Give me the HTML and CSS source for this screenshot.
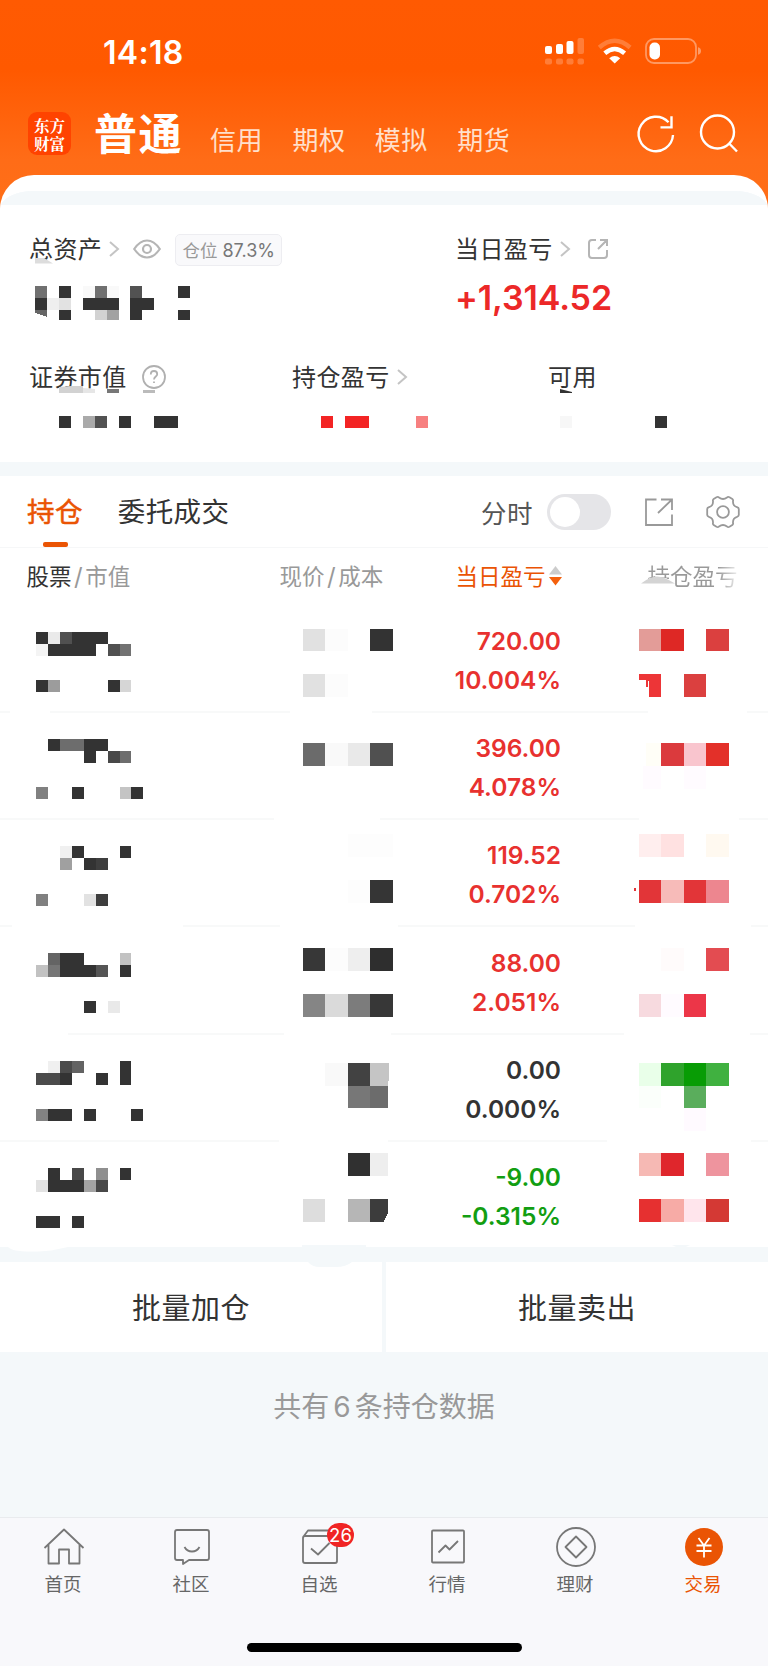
FILE: index.html
```html
<!DOCTYPE html>
<html lang="zh-CN">
<head>
<meta charset="utf-8">
<title>东方财富 交易</title>
<link rel="stylesheet" href="styles.css">
</head>
<body>
<header class="hero">
  <div class="status">
    <span class="clock">14:18</span>
    <svg class="status-icons" width="160" height="30" viewBox="0 0 160 30">
      <g fill="#fff">
        <rect x="1" y="9" width="7" height="8" rx="2"/><rect x="12" y="7" width="7" height="10" rx="2"/><rect x="22.500" y="4" width="7" height="13" rx="2"/>
        <g opacity=".22"><rect x="33.500" y="1" width="6.500" height="16" rx="2"/><rect x="1" y="21.500" width="7" height="6" rx="2"/><rect x="12" y="21.500" width="7" height="6" rx="2"/><rect x="22.500" y="21.500" width="7" height="6" rx="2"/><rect x="33.500" y="21.500" width="6.500" height="6" rx="2"/></g>
        <path d="M70.700 26.600 65.200 21.200Q70.700 16.700 76.200 21.200Z"/>
        <rect x="105.500" y="5.500" width="10.500" height="17" rx="5"/>
      </g>
      <g fill="none" stroke="#fff">
        <path d="M60.800 16.300Q70.700 7.700 80.600 16.300" stroke-width="4.500"/>
        <path d="M55.300 10.500Q70.700-3 86.100 10.500" stroke-width="4.500" opacity=".22"/>
        <rect x="102" y="2" width="50" height="24" rx="8" stroke-width="1.800" opacity=".38"/>
      </g>
      <path d="M154 10.200q3 .8 3 3.800t-3 3.800z" fill="#fff" opacity=".4"/>
    </svg>
  </div>
  <nav class="accounts">
    <div class="logo"><span>东方</span><span>财富</span></div>
    <h1>普通</h1>
    <span class="account">信用</span><span class="account">期权</span><span class="account">模拟</span><span class="account">期货</span>
    <svg class="hero-icon refresh" width="40" height="40" viewBox="0 0 40 40"><path d="M37 21A17.200 17.200 0 1 1 32.500 8.300M35.500 2.300V13.400H24.500" /></svg>
    <svg class="hero-icon" width="40" height="40" viewBox="0 0 40 40"><circle cx="18.500" cy="18" r="16.500"/><path d="M29.700 29 38 37.500"/></svg>
  </nav>
</header>

<main class="sheet">
  <div class="band band-top"></div>
  <section class="summary">
    <div class="totals">
      <div class="total">
        <div class="label-row">
          <span class="label total-label">总资产<svg class="smudge" width="18" height="6" viewBox="0 0 18 6"><path d="M0 0H9L18 5.500H0Z" fill="#ddd"/></svg></span>
          <svg class="chevron" width="10" height="16" viewBox="0 0 10 16"><path d="M1 1 9 8 1 15"/></svg>
          <svg class="eye" width="28" height="20" viewBox="0 0 28 20"><path d="M1.200 10Q7 1.500 14 1.500T26.800 10Q21 18.500 14 18.500T1.200 10Z"/><circle cx="14" cy="10" r="4"/></svg>
          <span class="position"><span>仓位</span> <b>87.3%</b></span>
        </div>
        <svg class="pixels big-pixels" width="155.090" height="33.600" viewBox="0 0 13 2.820" preserveAspectRatio="none">
          <g fill="#333"><path d="M2 0h1v1h-1zM12 0h1v1h-1zM0 1h1v1h-1zM4 1h3v1h-3zM8 1h2v1h-2zM2 2h1v.82h-1zM8 2h1v.82h-1zM12 2h1v.82h-1z"/></g>
          <path fill="#707070" d="M0 0h1v1h-1zM5 0h1v1h-1z"/><path fill="#525252" d="M8 0h1v1h-1z"/><path fill="#666" d="M0 2h1v.6L0 2.250z"/>
          <path fill="#f9f9f9" d="M4 0h1v1h-1zM6 0h1v1h-1z"/><path fill="#efefef" d="M1 1h1v1h-1z"/><path fill="#e2e2e2" d="M2 1h1v1h-1z"/><path fill="#d2d2d2" d="M5 2h1v.82h-1z"/><path fill="#a2a2a2" d="M6 2h1v.82h-1z"/>
        </svg>
      </div>
      <div class="total">
        <div class="label-row">
          <span class="label">当日盈亏</span>
          <svg class="chevron" width="10" height="16" viewBox="0 0 10 16"><path d="M1 1 9 8 1 15"/></svg>
          <svg class="share-small" width="22" height="22" viewBox="0 0 22 22"><path d="M9 2H5Q2 2 2 5V17Q2 20 5 20H17Q20 20 20 17V12M13 2H20V8M20 2 11 11"/></svg>
        </div>
        <div class="profit">+1,314.52</div>
      </div>
    </div>
    <div class="details">
      <div>
        <div class="label-row"><span class="label sec-label">证券市值<svg class="smudge" width="100" height="8" viewBox="0 0 100 8"><path d="M0 2 12 1H24V8H0Z" fill="#d2d2d2"/><path d="M24 3 36 4V8H24Z" fill="#e6e6e6"/><path d="M48 4H60V8H48Z" fill="#777"/><path d="M84 5H96V8H84Z" fill="#bbb"/></svg></span>
          <svg class="help" width="24" height="24" viewBox="0 0 24 24"><circle cx="12" cy="12" r="11"/><path d="M8.800 9.500Q8.800 6 12 6T15.200 9.200C15.200 11.500 12 11.600 12 14.500M12 16.500V18"/></svg></div>
        <svg class="pixels detail-pixels" width="119.300" height="12" viewBox="0 0 10 1" preserveAspectRatio="none"><path fill="#333" d="M0 0h1v1h-1zM5 0h1v1h-1zM8 0h2v1h-2z"/><path fill="#aaa" d="M2 0h1v1h-1z"/><path fill="#525252" d="M3 0h1v1h-1z"/></svg>
      </div>
      <div>
        <div class="label-row"><span class="label">持仓盈亏</span><svg class="chevron" width="10" height="16" viewBox="0 0 10 16"><path d="M1 1 9 8 1 15"/></svg></div>
        <svg class="pixels detail-pixels held-pixels" width="107.400" height="12" viewBox="0 0 9 1" preserveAspectRatio="none"><path fill="#f32424" d="M0 0h1v1h-1zM2 0h2v1h-2z"/><path fill="#f78080" d="M8 0h1v1h-1z"/></svg>
      </div>
      <div>
        <div class="label-row"><span class="label avail-label">可用<svg class="smudge" width="12" height="4" viewBox="0 0 12 4"><path d="M0 0 12 3V4H0Z" fill="#333"/></svg></span></div>
        <svg class="pixels detail-pixels avail-pixels" width="107.400" height="12" viewBox="0 0 9 1" preserveAspectRatio="none"><path fill="#f7f7f7" d="M0 0h1v1h-1z"/><path fill="#333" d="M8 0h1v1h-1z"/></svg>
      </div>
    </div>
  </section>
  <div class="band"></div>

  <section class="holdings">
    <div class="tabs">
      <span class="tab active">持仓</span><span class="tab">委托成交</span>
      <span class="mode">分时</span><span class="toggle"></span>
      <svg class="tool share" width="28" height="28" viewBox="0 0 28 28"><path d="M11.500 1.500H1V27H27V16.500M16 1.500H27V12M27 1.500 13 15"/></svg>
      <svg class="tool" width="34" height="34" viewBox="0 0 34 34"><path d="M10.500 2.200Q12 1.400 13 2.500Q17 5.500 21 2.500Q22 1.400 23.500 2.200L26.300 3.900Q27.400 4.800 27 6.200Q26.700 11 31 12.200Q32.800 12.800 32.800 14V20Q32.800 21.200 31 21.800Q26.700 23 27 27.800Q27.400 29.200 26.300 30.100L23.500 31.800Q22 32.600 21 31.500Q17 28.500 13 31.500Q12 32.600 10.500 31.800L7.700 30.100Q6.600 29.200 7 27.800Q7.300 23 3 21.800Q1.200 21.200 1.200 20V14Q1.200 12.800 3 12.200Q7.300 11 7 6.200Q6.600 4.800 7.700 3.900Z"/><circle cx="17" cy="17" r="5.900"/></svg>
    </div>
    <div class="head">
      <span class="c-name"><b>股票</b><i>/</i>市值</span>
      <span class="c-price">现价<i>/</i>成本</span>
      <span class="c-day">当日盈亏<svg width="13" height="20" viewBox="0 0 13 20"><path d="M6.500 0 13 8.500H0Z" fill="#ccc"/><path d="M6.500 19.500 13 11H0Z" fill="#f4600c"/></svg></span>
      <span class="c-hold"><span class="fade">持仓盈亏</span><svg class="smudge" width="34" height="16" viewBox="0 0 34 16"><path d="M0 9.500 9 4H25L34 9.500V16H0Z" fill="#fff"/><path d="M0 9.500Q9 2.500 16 2.500T34 9.500Z" fill="#d4d4d4"/></svg></span>
    </div>

    <div class="row">
      <svg class="pixels name-px" viewBox="0 0 9 5" preserveAspectRatio="none"><path fill="#333" d="M0 0h1v1h-1zM3 0h3v1h-3zM1 1h4v1h-4zM0 4h1v1h-1zM6 4h1v1h-1z"/><path fill="#eaeaea" d="M1 0h1v1h-1z"/><path fill="#505050" d="M2 0h1v1h-1zM6 1h1v1h-1z"/><path fill="#f4f4f4" d="M0 1h1v1h-1z"/><path fill="#727272" d="M7 1h1v1h-1z"/><path fill="#9c9c9c" d="M1 4h1v1h-1z"/><path fill="#d6d6d6" d="M7 4h1v1h-1z"/></svg>
      <svg class="pixels cell-px" viewBox="0 0 90 107"><g transform="translate(0 24.600) scale(22.450 22.850)"><path fill="#e1e1e1" d="M0 0h1v1h-1zM0 2h1v1h-1z"/><path fill="#fcfcfc" d="M1 0h1v1h-1zM1 2h1v1h-1z"/><path fill="#333" d="M3 0h1v1h-1z"/></g></svg>
      <div class="day up"><span>720.00</span><span>10.004%</span></div>
      <svg class="pixels cell-px" viewBox="0 0 90 107"><g transform="translate(0 24.600) scale(22.450 22.850)"><path fill="#e39c98" d="M0 0h1v1h-1z"/><path fill="#de2825" d="M1 0h1v1h-1z"/><path fill="#db403f" d="M3 0h1v1h-1zM2 2h1v1h-1z"/><path fill="#ed3537" d="M0 2h1v1h-.55v-.7h-.05v.27h-.1v-.3h-.3z"/></g></svg>
      <svg class="rule" viewBox="0 0 768 2"><path d="M0 1H10M50 1H290M372 1H648M747 1H768"/></svg>
    </div>
    <div class="row">
      <svg class="pixels name-px" viewBox="0 0 9 5" preserveAspectRatio="none"><path fill="#333" d="M1 0h1v1h-1zM4 0h2v1h-2zM4 1h1v1h-1zM3 4h1v1h-1zM8 4h1v1h-1z"/><path fill="#6d6d6d" d="M2 0h2v1h-2zM7 1h1v1h-1z"/><path fill="#484848" d="M6 1h1v1h-1z"/><path fill="#808080" d="M0 4h1v1h-1z"/><path fill="#c4c4c4" d="M7 4h1v1h-1z"/></svg>
      <svg class="pixels cell-px" viewBox="0 0 90 107"><g transform="translate(0 31.300) scale(22.450 22.850)"><path fill="#6b6b6b" d="M0 0h1v1h-1z"/><path fill="#f9f9f9" d="M1 0h1v1h-1z"/><path fill="#e9e9e9" d="M2 0h1v1h-1z"/><path fill="#505050" d="M3 0h1v1h-1z"/></g></svg>
      <div class="day up"><span>396.00</span><span>4.078%</span></div>
      <svg class="pixels cell-px" viewBox="0 0 90 107"><g transform="translate(0 31.300) scale(22.450 22.850)"><path fill="#fffef7" d="M.3 0h.7v1h-.7z"/><path fill="#db3a3d" d="M1 0h1v1h-1z"/><path fill="#f9c5ce" d="M2 0h1v1h-1z"/><path fill="#e33029" d="M3 0h1v1h-1z"/><path fill="#fffbff" d="M.2 1h.8v1h-.8zM2 1h1v1h-1z"/></g></svg>
      <svg class="rule" viewBox="0 0 768 2"><path d="M0 1H274M380 1H639M739 1H768"/></svg>
    </div>
    <div class="row">
      <svg class="pixels name-px" viewBox="0 0 9 5" preserveAspectRatio="none"><path fill="#333" d="M3 0h1v1h-1zM7 0h1v1h-1zM4 1h1v1h-1z"/><path fill="#3e3e3e" d="M5 1h1v1h-1zM5 4h1v1h-1z"/><path fill="#f0f0f0" d="M2 0h1v1h-1z"/><path fill="#a0a0a0" d="M2 1h1v1h-1z"/><path fill="#808080" d="M0 4h1v1h-1z"/><path fill="#e2e2e2" d="M4 4h1v1h-1z"/></svg>
      <svg class="pixels cell-px" viewBox="0 0 90 107"><g transform="translate(0 15.100) scale(22.450 22.850)"><path fill="#fdfdfd" d="M2 0h2v1h-2zM2 2h1v1h-1z"/><path fill="#353535" d="M3 2h1v1h-1z"/></g></svg>
      <div class="day up"><span>119.52</span><span>0.702%</span></div>
      <svg class="pixels cell-px" viewBox="0 0 90 107"><g transform="translate(0 15.100) scale(22.450 22.850)"><path fill="#ffeeee" d="M0 0h1v1h-1z"/><path fill="#ffe1e1" d="M1 0h1v1h-1z"/><path fill="#fff9f0" d="M3 0h1v1h-1z"/><path fill="#e23538" d="M0 2h1v1h-1zM2 2h1v1h-1z"/><path fill="#f7bbb9" d="M1 2h1v1h-1z"/><path fill="#ed868f" d="M3 2h1v1h-1z"/><path fill="#e23538" d="M-.22 2.350h.09v.08l-.05.08h-.04z"/></g></svg>
      <svg class="rule" viewBox="0 0 768 2"><path d="M0 1H12M183 1H280M398 1H635M751 1H768"/></svg>
    </div>
    <div class="row">
      <svg class="pixels name-px" viewBox="0 0 9 5" preserveAspectRatio="none"><path fill="#333" d="M2 0h2v2h-2zM4 1h1v1h-1zM7 1h1v1h-1zM4 4h1v1h-1z"/><path fill="#646464" d="M1 0h1v1h-1z"/><path fill="#757575" d="M1 1h1v1h-1z"/><path fill="#c2c2c2" d="M0 1h1v1h-1zM7 0h1v1h-1z"/><path fill="#555" d="M5 1h1v1h-1z"/><path fill="#e9e9e9" d="M6 4h1v1h-1z"/></svg>
      <svg class="pixels cell-px" viewBox="0 0 90 107"><g transform="translate(0 22) scale(22.450 22.850)"><path fill="#373737" d="M0 0h1v1h-1zM3 2h1v1h-1z"/><path fill="#fcfcfc" d="M1 0h1v1h-1z"/><path fill="#eee" d="M2 0h1v1h-1z"/><path fill="#2e2e2e" d="M3 0h1v1h-1z"/><path fill="#858585" d="M0 2h1v1h-1z"/><path fill="#dadada" d="M1 2h1v1h-1z"/><path fill="#7c7c7c" d="M2 2h1v1h-1z"/></g></svg>
      <div class="day up"><span>88.00</span><span>2.051%</span></div>
      <svg class="pixels cell-px" viewBox="0 0 90 107"><g transform="translate(0 22) scale(22.450 22.850)"><path fill="#fffbfb" d="M1 0h1v1h-1z"/><path fill="#e34c51" d="M3 0h1v1h-1z"/><path fill="#f7dadf" d="M0 2h1v1h-1z"/><path fill="#fffbff" d="M1 2h1v1h-1z"/><path fill="#ec3648" d="M2 2h1v1h-1z"/></g></svg>
      <svg class="rule" viewBox="0 0 768 2"><path d="M68 1H284M391 1H624M750 1H768"/></svg>
    </div>
    <div class="row">
      <svg class="pixels name-px" viewBox="0 0 9 5" preserveAspectRatio="none"><path fill="#333" d="M7 0h1v2h-1zM2 1h1v1h-1zM5 1h1v1h-1zM1 4h2v1h-2zM4 4h1v1h-1zM8 4h1v1h-1z"/><path fill="#f0f0f0" d="M1 0h1v1h-1z"/><path fill="#4b4b4b" d="M2 0h1v1h-1zM0 1h2v1h-2z"/><path fill="#636363" d="M3 0h1v1h-1z"/><path fill="#828282" d="M0 4h1v1h-1z"/></svg>
      <svg class="pixels cell-px" viewBox="0 0 90 107"><g transform="translate(0 28.700) scale(22.450 22.850)"><path fill="#f9f9f9" d="M1 0h1v1h-1z"/><path fill="#424242" d="M2 0h1v1h-1z"/><path fill="#c5c5c5" d="M3 0h.85l-.05 1h-.8z"/><path fill="#777" d="M2 1h1v1h-1z"/><path fill="#6c6c6c" d="M3 1h.8v1h-.8z"/></g></svg>
      <div class="day"><span>0.00</span><span>0.000%</span></div>
      <svg class="pixels cell-px" viewBox="0 0 90 107"><g transform="translate(0 28.700) scale(22.450 22.850)"><path fill="#e9ffe9" d="M0 0h1v1h-1z"/><path fill="#2fa32c" d="M1 0h1v1h-1z"/><path fill="#089c05" d="M2 0h1v1h-1z"/><path fill="#40b140" d="M3 0h1v1h-1z"/><path fill="#5aad5c" d="M2 1h1v1h-1z"/><path fill="#fbfffb" d="M0 1h1v1h-1z"/><path fill="#fffaff" d="M2 2h1v1h-1z"/></g></svg>
      <svg class="rule" viewBox="0 0 768 2"><path d="M0 1H279M388 1H607M751 1H768"/></svg>
    </div>
    <div class="row">
      <svg class="pixels name-px" viewBox="0 0 9 5" preserveAspectRatio="none"><path fill="#333" d="M1 0h1v1h-1zM7 0h1v1h-1zM1 1h3v1h-3zM0 4h2v1h-2zM3 4h1v1h-1z"/><path fill="#484848" d="M3 0h1v1h-1zM5 1h1v1h-1z"/><path fill="#8f8f8f" d="M5 0h1v1h-1z"/><path fill="#e2e2e2" d="M0 1h1v1h-1z"/><path fill="#a3a3a3" d="M4 1h1v1h-1z"/></svg>
      <svg class="pixels cell-px" viewBox="0 0 90 107"><g transform="translate(0 12.300) scale(22.450 22.850)"><path fill="#303030" d="M2 0h1v1h-1z"/><path fill="#eee" d="M3 0h.8v1h-.8z"/><path fill="#ddd" d="M0 2h1v1h-1z"/><path fill="#b6b6b6" d="M2 2h1v1h-1z"/><path fill="#3c3c3c" d="M3 2h.8v.6l-.2.4h-.6z"/></g></svg>
      <div class="day down"><span>-9.00</span><span>-0.315%</span></div>
      <svg class="pixels cell-px" viewBox="0 0 90 107"><g transform="translate(0 12.300) scale(22.450 22.850)"><path fill="#f6b9b4" d="M0 0h1v1h-1z"/><path fill="#df262c" d="M1 0h1v1h-1z"/><path fill="#ee949e" d="M3 0h1v1h-1z"/><path fill="#e63030" d="M0 2h1v1h-1z"/><path fill="#f7aba6" d="M1 2h1v1h-1z"/><path fill="#ffe5ec" d="M2 2h1v1h-1z"/><path fill="#d43934" d="M3 2h1v1h-1z"/></g></svg>
    </div>
  </section>
  <div class="band band-bottom"><svg class="edge" width="768" height="26" viewBox="0 0 768 26"><path fill="#fff" d="M8 2H68L56 4.500Q48 6.500 30 6.500T8 2Z"/><path fill="#f4f8fa" d="M302 0H366V2H302ZM308 17H352Q346 22 336 22H320Q312 22 308 17ZM672 0H690L686 2H676Z"/></svg></div>
  <div class="actions"><span>批量加仓</span><span>批量卖出</span></div>
  <p class="count">共有<span>6</span>条持仓数据</p>
</main>

<footer class="dock">
  <nav class="dock-items">
    <div class="item"><svg width="42" height="42" viewBox="0 0 42 42"><path d="M1.500 21 21 2.500 40.500 21M5.500 18V36.500H16V22.500H26V36.500H36.500V18"/></svg><span>首页</span></div>
    <div class="item"><svg width="42" height="42" viewBox="0 0 42 42"><path d="M6 3H36Q38 3 38 5V31Q38 33 36 33H18L12 37V33H6Q4 33 4 31V5Q4 3 6 3ZM13.500 20Q16 24.500 21 24.500T28.500 20"/></svg><span>社区</span></div>
    <div class="item"><svg width="42" height="42" viewBox="0 0 42 42"><path d="M4.500 9.500 9 3.500H34L38 9.500M6 9H36Q38 9 38 11V34Q38 36 36 36H6Q4 36 4 34V11Q4 9 6 9ZM12 21.500 19 27.500 30.500 16"/></svg><em>26</em><span>自选</span></div>
    <div class="item"><svg width="42" height="42" viewBox="0 0 42 42"><path d="M6 3.500H36Q37 3.500 37 4.500V34.500Q37 35.500 36 35.500H6Q5 35.500 5 34.500V4.500Q5 3.500 6 3.500ZM11.500 25.500 18.500 18.500 22.500 22.500 31 14"/></svg><span>行情</span></div>
    <div class="item"><svg width="42" height="42" viewBox="0 0 42 42"><circle cx="21" cy="20" r="19"/><path d="M21 9.500 31.500 20 21 30.500 10.500 20Z"/></svg><span>理财</span></div>
    <div class="item current"><svg width="42" height="42" viewBox="0 0 42 42"><circle cx="21" cy="20" r="19"/><path d="M15.500 11 21 18.500 26.500 11M13.500 18.500H28.500M13.500 24H28.500M21 18.500V30.500"/></svg><span>交易</span></div>
  </nav>
  <div class="home-bar"></div>
</footer>
</body>
</html>
```
FILE: styles.css
```css
* { box-sizing: border-box; }
body {
  margin: 0;
  width: 768px;
  height: 1666px;
  display: flex;
  flex-direction: column;
  overflow: hidden;
  background: #f4f8fa;
  color: #333;
  font-family: Inter, "Noto Sans CJK SC", sans-serif;
}
b, i, em { font-weight: inherit; font-style: normal; }
svg { display: block; flex: none; overflow: visible; }
span, h1 { white-space: nowrap; }

.hero {
  flex: none;
  height: 225px;
  background: linear-gradient(#ff5a02 0, #ff5900 70px, #ff6c17 160px, #ff7018 225px);
  color: #fff;
}
.status { height: 104px; display: flex; justify-content: space-between; padding: 0 68px 0 103px; }
.clock { margin-top: 33px; font-size: 32px; line-height: 40px; font-weight: 600; letter-spacing: .3px; }
.status-icons { width: 160px; margin: 37px -4px 0 0; }
.accounts { height: 62px; display: flex; align-items: center; padding: 0 29px 0 28px; }
.logo {
  width: 43px;
  height: 43px;
  margin: -3px 23px 0 0;
  border-radius: 9px;
  background: #ff4300;
  display: flex;
  flex-direction: column;
  align-items: center;
  justify-content: center;
  font: 700 15.500px/18px "Noto Serif CJK SC", "Noto Sans CJK SC", serif;
}
.accounts h1 { margin: -3px 27px 0 0; font-size: 43px; line-height: 56px; font-weight: 700; letter-spacing: 1.500px; }
.account { width: 82.400px; margin-top: 12px; font-size: 26px; line-height: 36px; color: #ffe0cc; letter-spacing: .5px; }
.hero-icon { fill: none; stroke: #fff; stroke-width: 2.400; margin-top: -2px; }
.refresh { margin-left: auto; margin-right: 23px; }

.sheet {
  flex: none;
  height: 1342px;
  margin-top: -50px;
  border-radius: 34px 34px 0 0;
  background: #f4f8fa;
  overflow: hidden;
  border-top: 16.500px solid #fff;
}
.band { height: 14px; background: #f4f8fa; position: relative; }
.summary { height: 256.500px; background: #fff; padding: 25px 0 0 29px; }
.label-row { display: flex; align-items: center; height: 38px; }
.label { font-size: 24px; line-height: 36px; letter-spacing: .4px; position: relative; top: 1px; }
.chevron { margin-left: 7px; fill: none; stroke: #c4c4c4; stroke-width: 2; }
.eye { margin-left: 14px; fill: none; stroke: #b5b5b5; stroke-width: 2.200; }
.position {
  width: 107px;
  height: 32px;
  margin: 2px 0 0 14px;
  border: 1.500px solid #ededf1;
  border-radius: 5px;
  background: #f9f9fb;
  text-align: center;
  font-size: 17.500px;
  line-height: 31px;
  color: #999;
}
.position b { color: #777; font-size: 18px; }
.share-small { margin-left: 17px; fill: none; stroke: #b5b5b5; stroke-width: 2; }
.totals { display: grid; grid-template-columns: 426px 1fr; height: 128px; }
.pixels { shape-rendering: crispEdges; }
.big-pixels { margin: 17.500px 0 0 6.300px; }
.profit { margin-top: 8px; font-size: 34px; line-height: 44px; font-weight: 600; color: #ec2828; letter-spacing: -.1px; }
.details { display: grid; grid-template-columns: 263px 256px 1fr; }
.help { margin-left: 15px; fill: none; stroke: #b0b0b0; stroke-width: 1.800; }
.detail-pixels { margin: 20px 0 0 30px; }
.held-pixels { margin-left: 29px; }
.avail-pixels { margin-left: 12px; }
.smudge { position: absolute; }
.total-label .smudge { left: 6px; top: 25.500px; }
.sec-label .smudge { left: 30px; top: 25px; }
.avail-label .smudge { left: 12px; top: 29px; }

.holdings { background: #fff; height: 771px; }
.tabs { display: flex; align-items: center; height: 72px; padding: 0 28px 0 27px; border-bottom: 1.500px solid #f6f7f8; }
.tab { position: relative; margin-right: 35px; margin-top: 2px; font-size: 27.500px; line-height: 70px; letter-spacing: .4px; }
.active { color: #ea5404; -webkit-text-stroke: .5px #ea5404; }
.active::after { content: ""; position: absolute; left: 16px; bottom: 0; width: 25px; height: 5px; border-radius: 2px; background: #ea5404; }
.mode { margin: 0 14px 0 auto; font-size: 25.500px; color: #555; letter-spacing: .5px; }
.toggle { width: 64px; height: 36px; margin-right: 34px; margin-top: 1px; padding: 3px; border-radius: 18px; background: #e5e5e8; }
.toggle::before { content: ""; display: block; width: 30px; height: 30px; border-radius: 50%; background: #fff; }
.tool { fill: none; stroke: #999; stroke-width: 1.800; margin-top: 1px; }
.share { margin-right: 33px; }
.head { display: grid; grid-template-columns: 253px 175px 183px 1fr; align-items: center; height: 56.900px; padding-left: 26.500px; font-size: 22.500px; line-height: 57px; color: #999; }
.head b { color: #333; }
.head i { margin: 0 2.500px; font-size: 24px; }
.c-day { display: flex; align-items: center; gap: 3px; margin-left: 1px; color: #ea5404; }
.c-hold { position: relative; padding-left: 10px; }
.fade { background: linear-gradient(90deg, #999 70px, #eee 90px); -webkit-background-clip: text; background-clip: text; color: transparent; }
.c-hold .smudge { left: 3px; top: 26px; }

.row { display: grid; grid-template-columns: 302.500px 105px 153.500px 78px 1fr; grid-template-rows: 106.300px 1px; height: 107.300px; }
.name-px { width: 107.370px; height: 59.650px; margin: 27.200px 0 0 35.500px; }
.cell-px { width: 90px; height: 107px; }
.day { display: flex; flex-direction: column; align-items: flex-end; padding-top: 17.500px; font-size: 24.500px; line-height: 39px; font-weight: 600; }
.row > .cell-px:nth-of-type(3) { grid-column: 5; }
.up { color: #e8312f; }
.down { color: #129e12; }
.rule { grid-row: 2; grid-column: 1 / -1; width: 768px; height: 2px; stroke: #f6f7f8; stroke-width: 1.500; }

.band-bottom { height: 15px; }
.edge { position: absolute; left: 0; top: -2px; z-index: 1; }
.actions { display: grid; grid-template-columns: 382px 1fr; gap: 4px; height: 90px; }
.actions span { background: #fff; text-align: center; font-size: 29px; line-height: 94px; height: 90px; letter-spacing: .5px; }
.count { margin: 36px 0 0; text-align: center; font-size: 28px; line-height: 38px; color: #999; }
.count span { margin: 0 4px; }

.dock { flex: none; height: 149px; background: #f8f8fb; border-top: 1.500px solid #e9ebee; }
.dock-items { display: grid; grid-template-columns: repeat(6, 1fr); padding-top: 9px; }
.item { position: relative; display: flex; flex-direction: column; align-items: center; font-size: 18.500px; line-height: 28px; color: #666; }
.item svg { fill: none; stroke: #777; stroke-width: 1.800; stroke-linejoin: round; }
.item span { margin: 1px 2px 0 0; }
.item em { position: absolute; left: 71px; top: -4px; width: 27px; height: 24px; border-radius: 12px; background: #f02424; color: #fff; text-align: center; font-size: 18.500px; line-height: 24px; }
.current { color: #ea5404; }
.current svg circle { fill: #ea5404; stroke: none; }
.current svg path { stroke: #fff; }
.home-bar { width: 275px; height: 9px; margin: 45px auto 0; border-radius: 5px; background: #000; }
```
